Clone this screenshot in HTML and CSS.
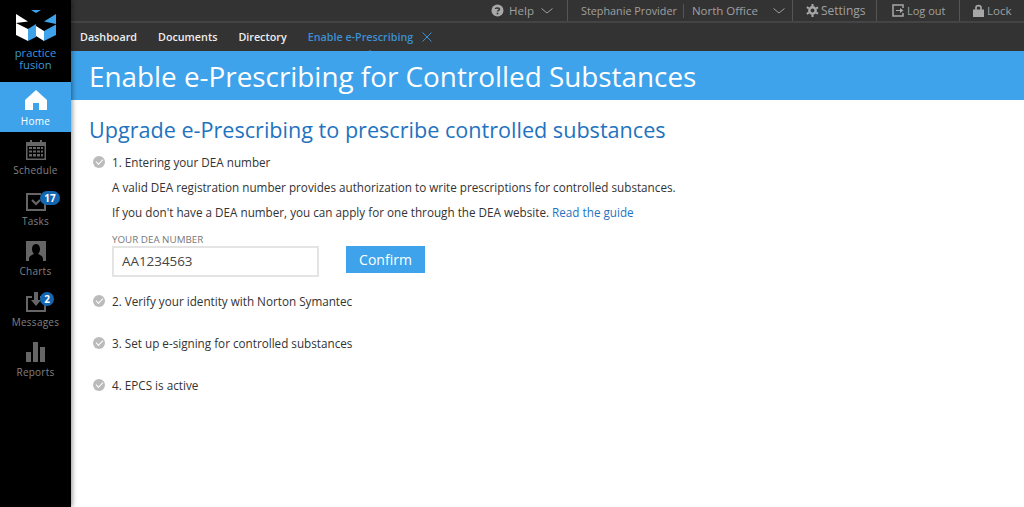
FILE: index.html
```html
<!DOCTYPE html>
<html lang="en">
<head>
    <meta charset="UTF-8">
    <meta name="viewport" content="width=device-width, initial-scale=1.0">
    <title>Enable e-Prescribing</title>
    <link rel="stylesheet" href="styles.css">
</head>
<body>
<div class="app">
    <nav class="sidebar">
        <div class="logo">
            <svg width="40" height="31" viewBox="0 0 40 31">
                <polygon points="15,0 25,0 20,3" fill="#3ea3ea"/>
                <polygon points="0,4 12,11.500 0,13" fill="#fff"/>
                <polygon points="40,4 28,11.500 40,14" fill="#3ea3ea"/>
                <polygon points="0,13 12,19 12,31 0,25" fill="#fff"/>
                <polygon points="12,19 20,14 20,27 12,31" fill="#3ea3ea"/>
                <polygon points="20,16 28,21 28,31 20,26" fill="#fff"/>
                <polygon points="28,21 40,14.500 40,25 28,31" fill="#3ea3ea"/>
            </svg>
            <div class="logo-text">practice<br>fusion</div>
        </div>
        <a class="nav-item active">
            <svg width="22" height="20" viewBox="0 0 22 20"><path d="M11 0 L22 10 V20 H14 V13 H8 V20 H0 V10 Z" fill="#fff"/></svg>
            <span>Home</span>
        </a>
        <a class="nav-item">
            <svg width="20" height="20" viewBox="0 0 20 20"><path d="M0 2H4V0H6V2H14V0H16V2H20V20H0Z" fill="#666"/><path d="M1.500 6H18.500V18.500H1.500Z" fill="#000"/><path d="M3 7H6V9H3ZM7 7H10V9H7ZM11 7H14V9H11ZM15 7H17V9H15ZM3 10.500H6V12.500H3ZM7 10.500H10V12.500H7ZM11 10.500H14V12.500H11ZM15 10.500H17V12.500H15ZM3 14H6V16.500H3ZM7 14H10V16.500H7ZM11 14H14V16.500H11ZM15 14H17V16.500H15Z" fill="#666"/></svg>
            <span>Schedule</span>
        </a>
        <a class="nav-item">
            <svg width="20" height="20" viewBox="0 0 20 20"><path d="M15 3H1V19H19V13" fill="none" stroke="#666" stroke-width="2"/><path d="M6 9L10 13L14 9" fill="none" stroke="#666" stroke-width="2.200"/></svg>
            <span>Tasks</span>
            <b class="badge wide">17</b>
        </a>
        <a class="nav-item">
            <svg width="20" height="20" viewBox="0 0 20 20"><path d="M0 0H20V20H0Z" fill="#666"/><path d="M10 3C13 3 14 6 14 8C14 10 13 12 12 13C14 14 17 15 17 18V20H3V18C3 15 6 14 8 13C7 12 6 10 6 8C6 6 7 3 10 3Z" fill="#000"/></svg>
            <span>Charts</span>
        </a>
        <a class="nav-item">
            <svg width="20" height="20" viewBox="0 0 20 20"><path d="M6 5H1V19H19V5H14" fill="none" stroke="#666" stroke-width="2"/><path d="M8 0H12V8H15L10 14L5 8H8Z" fill="#666"/></svg>
            <span>Messages</span>
            <b class="badge">2</b>
        </a>
        <a class="nav-item">
            <svg width="20" height="20" viewBox="0 0 20 20"><path d="M0 10H5V20H0ZM7 0H12V20H7ZM14 5H19V20H14Z" fill="#666"/></svg>
            <span>Reports</span>
        </a>
    </nav>

    <div class="main">
        <header class="topbar">
            <div class="tool help">
                <svg width="13" height="13" viewBox="0 0 13 13"><circle cx="6.500" cy="6.500" r="6" fill="#a8a8a8"/><path d="M4.500 5C4.500 3.500 8.500 3.500 8.500 5.200C8.500 6.400 6.500 6.300 6.500 7.600" fill="none" stroke="#333" stroke-width="1.500"/><rect x="5.700" y="8.700" width="1.600" height="1.600" fill="#333"/></svg>
                <span>Help</span>
                <svg class="chev" width="12" height="6" viewBox="0 0 12 6"><path d="M0.500 0.500L6 5L11.500 0.500" fill="none" stroke="#a0a0a0"/></svg>
            </div>
            <div class="tool user">
                <span class="provider">Stephanie Provider</span>
                <i class="thin-sep"></i>
                <span class="office">North Office</span>
                <svg class="chev" width="12" height="6" viewBox="0 0 12 6"><path d="M0.500 0.500L6 5L11.500 0.500" fill="none" stroke="#a0a0a0"/></svg>
            </div>
            <div class="tool settings">
                <svg width="13" height="13" viewBox="0 0 13 13"><circle cx="6.500" cy="6.500" r="3.200" fill="none" stroke="#a8a8a8" stroke-width="2.400"/><path d="M6.500 0V13M0.800 3.200L12.200 9.800M0.800 9.800L12.200 3.200" stroke="#a8a8a8" stroke-width="2" stroke-dasharray="2.400 8.200"/></svg>
                <span>Settings</span>
            </div>
            <div class="tool logout">
                <svg width="12" height="13" viewBox="0 0 12 13"><path d="M11 4V1H1V12H11V9" fill="none" stroke="#a8a8a8" stroke-width="1.500"/><path d="M4 6H8V4L11.500 6.500L8 9V7H4Z" fill="#a8a8a8"/></svg>
                <span>Log out</span>
            </div>
            <div class="tool lock">
                <svg width="11" height="13" viewBox="0 0 11 13"><path d="M3 6V3.500C3 1 8 1 8 3.500V6" fill="none" stroke="#a8a8a8" stroke-width="1.600"/><path d="M0 5.500H11V13H0Z" fill="#a8a8a8"/></svg>
                <span>Lock</span>
            </div>
        </header>

        <div class="tabs">
            <a class="tab">Dashboard</a>
            <a class="tab">Documents</a>
            <a class="tab">Directory</a>
            <a class="tab current">Enable e-Prescribing
                <svg width="10" height="10" viewBox="0 0 10 10"><path d="M0.500 0.500L9.500 9.500M9.500 0.500L0.500 9.500" stroke="#3d8fd1"/></svg>
            </a>
        </div>

        <div class="banner"><h1>Enable e-Prescribing for Controlled Substances</h1></div>

        <section class="content">
            <h2>Upgrade e-Prescribing to prescribe controlled substances</h2>

            <div class="step open">
                <i class="check"></i>
                <div class="step-body">
                    <div class="step-title">1. Entering your DEA number</div>
                    <p>A valid DEA registration number provides authorization to write prescriptions for controlled substances.</p>
                    <p>If you don't have a DEA number, you can apply for one through the DEA website. <a class="link">Read the guide</a></p>
                    <label for="dea">YOUR DEA NUMBER</label>
                    <div class="dea-row">
                        <input id="dea" type="text" value="AA1234563">
                        <button class="confirm" type="button">Confirm</button>
                    </div>
                </div>
            </div>
            <div class="step"><i class="check"></i><div class="step-title">2. Verify your identity with Norton Symantec</div></div>
            <div class="step"><i class="check"></i><div class="step-title">3. Set up e-signing for controlled substances</div></div>
            <div class="step"><i class="check"></i><div class="step-title">4. EPCS is active</div></div>
        </section>
    </div>
</div>
</body>
</html>
```

FILE: styles.css
```css
*{
    box-sizing: border-box;
}

body{
    margin:0;
    font-family: "Open Sans", "Noto Sans", sans-serif;
    background-color:#fff;
}

.app{
    display:flex;
    height:507px;
    overflow:hidden;
}

/* left nav */
.sidebar{
    width:71px;
    flex-shrink:0;
    background-color:#000;
    box-shadow:1px 0 5px rgba(0,0,0,0.45);
    z-index:1;
}

.logo{
    height:82px;
    padding-top:10px;
    display:flex;
    flex-direction:column;
    align-items:center;
}

.logo-text{
    margin-top:6px;
    font-size:11.200px;
    line-height:12px;
    color:#3a97dd;
    text-align:center;
}

.nav-item{
    position:relative;
    height:50.400px;
    display:flex;
    flex-direction:column;
    align-items:center;
    padding-top:8px;
    color:#808080;
    font-size:10px;
    letter-spacing:0.25px;
}

.nav-item span{
    margin-top:3px;
    line-height:14px;
}

.nav-item.active{
    background-color:#3ea3ea;
    color:#fff;
}

.nav-item.active span{
    margin-top:4px;
}

.badge{
    position:absolute;
    top:8px;
    left:40px;
    width:14px;
    height:14px;
    border-radius:50%;
    background-color:#1566b0;
    color:#fff;
    font-size:10px;
    line-height:14px;
    letter-spacing:0;
    text-align:center;
}

.badge.wide{
    width:20px;
    border-radius:7px;
}

.main{
    flex:1;
    min-width:0;
    display:flex;
    flex-direction:column;
}

/* top strip */
.topbar{
    height:23px;
    background-color:#333;
    border-bottom:2px solid #444;
    display:flex;
    justify-content:flex-end;
    color:#a0a0a0;
    font-size:11.500px;
    white-space:nowrap;
}

.tool{
    display:flex;
    align-items:center;
    height:21px;
    gap:5px;
    border-left:1px solid #555;
    padding-left:13px;
}

.help{
    border-left:0;
    padding-right:14px;
}

.help .chev{
    margin-left:2px;
}

.user{
    width:225px;
    gap:0;
}

.provider{
    font-size:10.800px;
}

.thin-sep{
    width:1px;
    height:14px;
    margin:0 8px 0 6px;
    background-color:#555;
}

.user .chev{
    margin-left:15px;
}

.settings{
    width:84px;
    gap:2px;
    font-size:12px;
}

.logout{
    width:83px;
    padding-left:15px;
    gap:3px;
    font-size:11px;
}

.lock{
    width:65px;
    gap:3px;
}

/* tabs */
.tabs{
    height:28px;
    background-color:#333;
    display:flex;
    align-items:center;
    padding-left:9px;
    gap:21px;
    font-size:10.750px;
    font-weight:600;
    color:#eee;
}

.tab.current{
    position:relative;
    color:#3d8fd1;
    display:flex;
    align-items:center;
    gap:9px;
}

.tab.current::after{
    content:"";
    position:absolute;
    left:50%;
    bottom:-9px;
    margin-left:-3px;
    border:3px solid transparent;
    border-top:0;
    border-bottom-color:#3ea3ea;
}

.banner{
    height:49px;
    background-color:#3ea3ea;
    padding-left:18px;
}

.banner h1{
    margin:0;
    font-size:27.850px;
    font-weight:400;
    line-height:51px;
    color:#fff;
}

.content{
    padding:15px 0 0 22px;
}

.content h2{
    margin:0 0 0 -4px;
    font-size:21.600px;
    font-weight:400;
    line-height:30px;
    color:#1f73c0;
}

.step{
    display:flex;
    gap:7px;
    margin-top:9px;
    min-height:18px;
    font-size:11.700px;
    line-height:16px;
    color:#333;
}

.step + .step{
    margin-top:24px;
}

.step.open + .step{
    margin-top:16px;
}

.step-body{
    flex:1;
}

.check{
    position:relative;
    flex-shrink:0;
    width:12px;
    height:12px;
    margin-top:2px;
    border-radius:50%;
    background-color:#bbb;
}

.check::after{
    content:"";
    position:absolute;
    left:3px;
    top:3px;
    width:6px;
    height:3px;
    border-left:1.500px solid #fff;
    border-bottom:1.500px solid #fff;
    transform:rotate(-45deg);
}

.step p{
    margin:9px 0 0;
    line-height:16px;
}

.link{
    color:#1f73c0;
}

label{
    display:block;
    margin-top:14px;
    font-size:9.800px;
    line-height:12px;
    color:#777;
}

.dea-row{
    display:flex;
    align-items:flex-start;
    gap:27px;
}

#dea{
    width:207px;
    height:31px;
    border:2px solid #e4e4e4;
    padding:0 8px 2px;
    font-family:inherit;
    font-size:13.400px;
    color:#444;
}

.confirm{
    width:79px;
    height:27px;
    border:0;
    background-color:#3ea3ea;
    color:#fff;
    font-family:inherit;
    font-size:14px;
}
```
